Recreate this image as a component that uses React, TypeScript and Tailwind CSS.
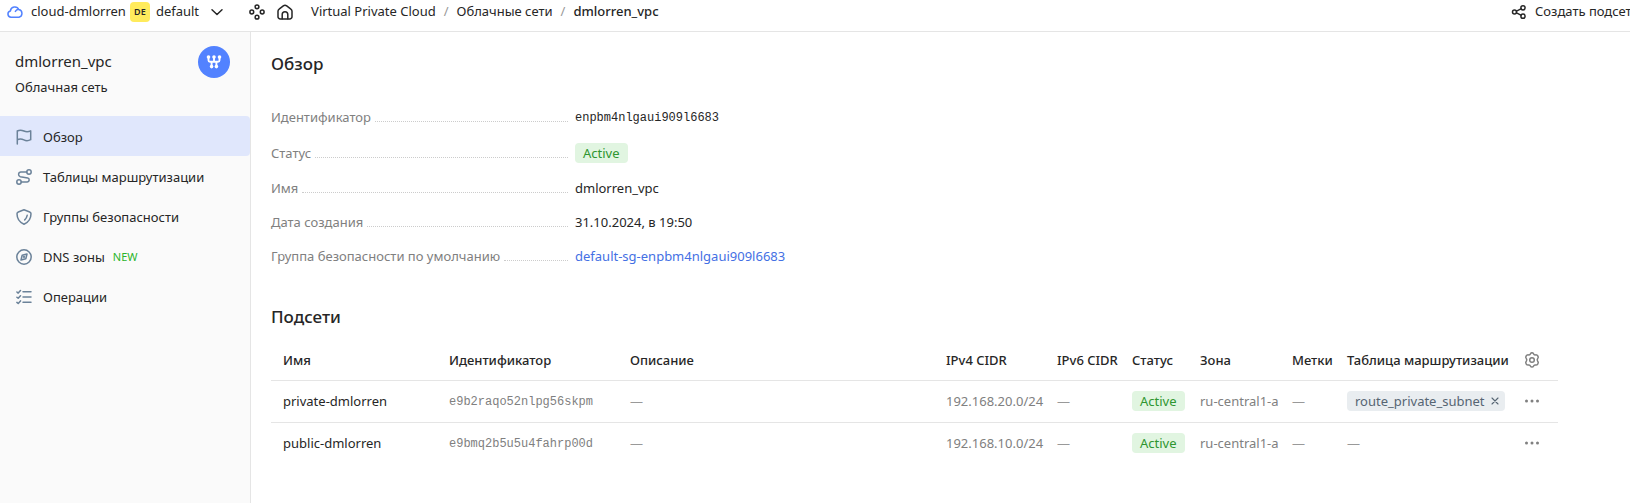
import type { ReactNode } from 'react';

type IconProps = { children: ReactNode; className?: string };

function Icon({ children, className = 'size-4' }: IconProps) {
  return (
    <svg
      viewBox="0 0 16 16"
      fill="none"
      stroke="currentColor"
      strokeWidth="1.5"
      strokeLinecap="round"
      strokeLinejoin="round"
      aria-hidden="true"
      className={`shrink-0 ${className}`}
    >
      {children}
    </svg>
  );
}

const cloud = <path d="M4 13.2a3.2 3.2 0 0 1-.6-6.3A4.4 4.4 0 0 1 11.8 5.6a3.9 3.9 0 0 1 .2 7.600zM8.400 7.400A3.500 3.500 0 0 1 11.800 5.600" />;
const chevron = <path d="M3 5.700 8 10.500l5-4.800" />;
const services = (
  <>
    <circle cx="8" cy="2.800" r="1.900" />
    <circle cx="8" cy="13.200" r="1.900" />
    <circle cx="2.800" cy="8" r="1.900" />
    <circle cx="13.200" cy="8" r="1.900" />
  </>
);
const home = (
  <>
    <path d="M1 7.300c0-.9.400-1.700 1.100-2.200l4.200-3.300a2.800 2.800 0 0 1 3.400 0l4.200 3.300c.7.500 1.100 1.300 1.100 2.200v5.400a2.300 2.300 0 0 1-2.300 2.300H3.300A2.300 2.300 0 0 1 1 12.700z" />
    <path d="M5.200 14.800V10.500a2.800 2.800 0 0 1 5.600 0v4.300" />
  </>
);
const share = (
  <>
    <circle cx="3.500" cy="8" r="2" />
    <circle cx="12" cy="3.800" r="2.100" />
    <circle cx="12" cy="12.200" r="2.100" />
    <path d="m5.500 7.100 4.400-2.200M5.500 8.900l4.400 2.200" />
  </>
);
const flag = (
  <path d="M1.300 15V2M1.300 2c2.200-1.200 4.400-1 6.600 0s4.400 1 6.800-.2v8.900c-2.400 1.200-4.800 1.200-6.800.2s-4.400-1.200-6.600-.2" />
);
const route = (
  <>
    <circle cx="3" cy="13" r="2.200" />
    <circle cx="13" cy="3" r="2.200" />
    <path d="M10.700 3H4.700a2.400 2.400 0 0 0-.4 4.700l7.400 1.200a2.100 2.100 0 0 1-.4 4.100H5.300" />
  </>
);
const shield = (
  <>
    <path d="M8 .8 13.700 3c.8.300 1.300 1 1.300 1.800 0 4.700-2.500 8.500-7 10.400C3.500 13.300 1 9.500 1 4.800 1 4 1.500 3.300 2.300 3z" />
    <path d="M11.200 6.300c-.4 1.900-1.200 3.300-2.500 4.600" />
  </>
);
const compass = (
  <>
    <circle cx="8" cy="8" r="7.200" />
    <path d="m11 5-1.200 4.800L5 11l1.200-4.800z" />
    <circle cx="8" cy="8" r=".4" />
  </>
);
const tasks = (
  <path d="M7 2.800h8M7 8h8M7 13.200h8M.9 3 2.200 4.100 4.500 1.500M.9 8.200l1.300 1.100 2.300-2.600M.9 13.400l1.300 1.100 2.300-2.600" />
);
const gear = (
  <>
    <path d="M6.500 1.800c.3-.7.8-1 1.500-1s1.200.3 1.500 1c.3.800 1 1.200 1.800 1.100 1.500-.3 2 .1 2.600 1.100.7 1.100.6 1.700-.3 2.800-.5.700-.5 1.500 0 2.200.9 1.100 1 1.700.3 2.800-.6 1-1.100 1.400-2.600 1.200-.8-.1-1.500.3-1.800 1.100-.3.700-.8 1-1.500 1s-1.200-.3-1.500-1c-.3-.8-1-1.200-1.800-1.100-1.500.2-2-.2-2.600-1.200-.7-1.100-.6-1.700.3-2.800.5-.7.500-1.500 0-2.200-.9-1.100-1-1.700-.3-2.800.6-1 1.100-1.400 2.600-1.100.8.100 1.500-.3 1.800-1.100z" />
    <circle cx="8" cy="8" r="2.300" />
  </>
);
const dots = (
  <g fill="currentColor" stroke="none">
    <circle cx="2.500" cy="8" r="1.500" />
    <circle cx="8" cy="8" r="1.500" />
    <circle cx="13.500" cy="8" r="1.500" />
  </g>
);
const network = (
  <>
    <path d="M2.500 3v3.200a1.500 1.500 0 0 0 1.500 1.500h8a1.500 1.500 0 0 0 1.500-1.500V3M8 3v4.700M5.600 8v4.800M10.400 8v4.800" strokeWidth="1.900" />
    <g fill="currentColor" stroke="none">
      <circle cx="2.500" cy="3" r="1.800" />
      <circle cx="8" cy="3" r="1.800" />
      <circle cx="13.500" cy="3" r="1.800" />
      <circle cx="5.600" cy="12.600" r="1.800" />
      <circle cx="10.400" cy="12.600" r="1.800" />
    </g>
  </>
);

const navItems = [
  { label: 'Обзор', icon: flag, active: true },
  { label: 'Таблицы маршрутизации', icon: route },
  { label: 'Группы безопасности', icon: shield },
  { label: 'DNS зоны', icon: compass, isNew: true },
  { label: 'Операции', icon: tasks },
];

function Status() {
  return (
    <span className="inline-block h-5 rounded-sm bg-[#e1f5e1] px-2 align-top leading-5 text-[#2f9630]">Active</span>
  );
}

function Dash() {
  return <span className="text-[#999]">—</span>;
}

const details: { label: string; value: ReactNode }[] = [
  {
    label: 'Идентификатор',
    value: <span className="font-['Liberation_Mono',monospace] text-xs leading-[18px]">enpbm4nlgaui909l6683</span>,
  },
  { label: 'Статус', value: <Status /> },
  { label: 'Имя', value: 'dmlorren_vpc' },
  { label: 'Дата создания', value: '31.10.2024, в 19:50' },
  {
    label: 'Группа безопасности по умолчанию',
    value: <a href="#sg" className="text-[#4470e4]">default-sg-enpbm4nlgaui909l6683</a>,
  },
];

const subnets = [
  { name: 'private-dmlorren', id: 'e9b2raqo52nlpg56skpm', cidr: '192.168.20.0/24', route: 'route_private_subnet' },
  { name: 'public-dmlorren', id: 'e9bmq2b5u5u4fahrp00d', cidr: '192.168.10.0/24', route: null },
];

const columns = [
  { title: 'Имя', width: 'w-[170px]' },
  { title: 'Идентификатор', width: 'w-[181px]' },
  { title: 'Описание', width: '' },
  { title: 'IPv4 CIDR', width: 'w-[111px]' },
  { title: 'IPv6 CIDR', width: 'w-[75px]' },
  { title: 'Статус', width: 'w-[68px]' },
  { title: 'Зона', width: 'w-[92px]' },
  { title: 'Метки', width: 'w-[55px]' },
  { title: 'Таблица маршрутизации', width: 'w-[177px]' },
];

export default function App() {
  return (
    <div className="flex min-h-screen flex-col bg-white font-['Noto_Sans',sans-serif] text-[13px] leading-[18px] text-[#262626]">
      <header className="flex items-center overflow-hidden border-b border-[#e5e5e5] pb-2 pl-[7px] leading-[23px] whitespace-nowrap">
        <a href="#cloud" className="flex items-center gap-2">
          <Icon className="size-4 text-[#5282ff]">{cloud}</Icon>
          cloud-dmlorren
        </a>
        <button type="button" className="ml-1 flex items-center">
          <span className="size-5 rounded-sm bg-[#ffeb5c] text-center text-[9px] leading-5 font-semibold">DE</span>
          <span className="ml-1.5">default</span>
          <Icon className="ml-2.5 size-4">{chevron}</Icon>
        </button>
        <button type="button" aria-label="Сервисы" className="ml-6">
          <Icon>{services}</Icon>
        </button>
        <a href="#home" aria-label="Главная" className="ml-3">
          <Icon>{home}</Icon>
        </a>
        <nav className="ml-[18px] flex gap-2">
          <a href="#vpc">Virtual Private Cloud</a>
          <span className="text-[#999]">/</span>
          <a href="#networks">Облачные сети</a>
          <span className="text-[#999]">/</span>
          <span className="font-medium">dmlorren_vpc</span>
        </nav>
        <button type="button" className="ml-auto flex w-[119px] shrink-0 items-center gap-2 overflow-hidden">
          <Icon>{share}</Icon>
          Создать подсеть
        </button>
      </header>

      <div className="flex flex-1">
        <aside className="w-[251px] shrink-0 border-r border-[#e5e5e5] bg-[#fafafa]">
          <div className="flex h-[84px] items-start justify-between pt-3.5 pr-5 pl-[15px]">
            <div className="pt-[5px]">
              <div className="text-[15px] leading-5">dmlorren_vpc</div>
              <div className="mt-[7px]">Облачная сеть</div>
            </div>
            <span className="flex size-8 items-center justify-center rounded-full bg-[#5282ff] text-white">
              <Icon>{network}</Icon>
            </span>
          </div>
          <nav>
            {navItems.map((item) => (
              <a
                key={item.label}
                href="#section"
                className={`flex h-10 items-center pt-px pl-4 ${item.active ? 'rounded-r-sm bg-[#e0e7fc]' : ''}`}
              >
                <Icon className="size-4 text-[#6b8299]">{item.icon}</Icon>
                <span className="ml-[11px]">{item.label}</span>
                {item.isNew && <span className="ml-2 text-[11px] text-[#2bb52b]">NEW</span>}
              </a>
            ))}
          </nav>
        </aside>

        <main className="min-w-0 flex-1 pt-5 pr-[72px] pl-5">
          <h1 className="text-[17px] leading-6 font-medium">Обзор</h1>
          <dl className="mt-[31px] flex flex-col gap-4">
            {details.map((row) => (
              <div key={row.label} className="flex items-center">
                <dt className="flex w-[304px] shrink-0 items-baseline gap-1 pr-[7px] text-[#808080]">
                  {row.label}
                  <span className="flex-1 border-b border-dotted border-[#ccc]" />
                </dt>
                <dd>{row.value}</dd>
              </div>
            ))}
          </dl>

          <h2 className="mt-10 text-[17px] leading-6 font-medium">Подсети</h2>
          <table className="mt-3 w-full table-fixed text-left whitespace-nowrap">
            <thead>
              <tr className="h-[39px] border-b border-[#e5e5e5]">
                {columns.map((c) => (
                  <th key={c.title} className={`px-2 font-medium first:pl-3 ${c.width}`}>{c.title}</th>
                ))}
                <th className="w-[42px] pl-2">
                  <button type="button" aria-label="Настройки" className="block text-[#808080]">
                    <Icon>{gear}</Icon>
                  </button>
                </th>
              </tr>
            </thead>
            <tbody>
              {subnets.map((s) => (
                <tr key={s.id} className="h-[42px] border-b border-[#e5e5e5] text-[#808080] last:border-b-0">
                  <td className="pr-2 pl-3 text-[#262626]">{s.name}</td>
                  <td className="px-2 pt-0.5 font-['Liberation_Mono',monospace] text-xs">{s.id}</td>
                  <td className="px-2"><Dash /></td>
                  <td className="px-2">{s.cidr}</td>
                  <td className="px-2"><Dash /></td>
                  <td className="px-2"><Status /></td>
                  <td className="px-2">ru-central1-a</td>
                  <td className="px-2"><Dash /></td>
                  <td className="px-2">
                    {s.route ? (
                      <span className="inline-flex h-5 items-center rounded-sm bg-[#e9edf0] pr-1 pl-2 align-top text-[#566573]">
                        {s.route}
                        <button type="button" aria-label="Отвязать" className="ml-1">
                          <Icon className="size-3">
                            <path d="m4 4 8 8M12 4l-8 8" />
                          </Icon>
                        </button>
                      </span>
                    ) : (
                      <Dash />
                    )}
                  </td>
                  <td className="pl-2">
                    <button type="button" aria-label="Действия" className="block">
                      <Icon>{dots}</Icon>
                    </button>
                  </td>
                </tr>
              ))}
            </tbody>
          </table>
        </main>
      </div>
    </div>
  );
}
